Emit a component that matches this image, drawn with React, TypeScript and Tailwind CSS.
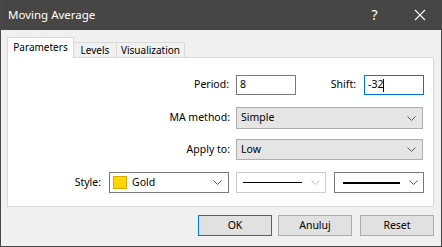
import React from "react";

const Chevron = ({ color = "#5a5a5a" }: { color?: string }) => (
  <svg width="9" height="5" viewBox="0 0 9 5" className="shrink-0">
    <polyline points="0.5,0.5 4.5,4.5 8.5,0.5" fill="none" stroke={color} strokeWidth="1" />
  </svg>
);

export default function App() {
  return (
    <div
      className="w-[442px] h-[247px] flex flex-col bg-[#f0f0f0] border-x border-b border-[#4a4846] text-black overflow-hidden"
      style={{ fontFamily: '"Noto Sans", "Open Sans", sans-serif' }}
    >
      {/* title bar */}
      <div className="h-[30px] shrink-0 bg-[#484644] flex items-center pl-[8px] text-white -mx-px">
        <div className="text-[11.5px] leading-none flex-1">Moving Average</div>
        <div className="w-[45px] flex justify-center text-[14px] leading-none">?</div>
        <div className="w-[45px] flex justify-center">
          <svg width="12" height="12" viewBox="0 0 12 12">
            <path d="M1 1 L11 11 M11 1 L1 11" stroke="#ffffff" strokeWidth="1.1" fill="none" />
          </svg>
        </div>
      </div>

      <div className="flex-1 flex flex-col pl-[6px] pr-[7px] text-[10.5px]">
        {/* tabs */}
        <div className="h-[28px] flex items-end pt-[7px] relative z-10 text-[10px]">
          <div className="h-[21px] w-[67px] bg-white border border-b-0 border-[#d9d9d9] flex items-center justify-center pb-[2px]">
            Parameters
          </div>
          <div className="h-[16px] w-[43px] border-t border-r border-[#d9d9d9] flex items-center justify-center">
            Levels
          </div>
          <div className="h-[16px] w-[68px] border-t border-r border-[#d9d9d9] flex items-center justify-center">
            Visualization
          </div>
        </div>

        {/* panel */}
        <div className="h-[150px] -mt-px bg-white border border-[#d9d9d9] flex flex-col pt-[17px]">
          {/* row 1 */}
          <div className="flex items-center h-[20px]">
            <div className="w-[221px] text-right">Period:</div>
            <div className="ml-[7px] w-[60px] h-[20px] border border-[#7a7a7a] flex items-center pl-[3px]">8</div>
            <div className="w-[60px] text-right">Shift:</div>
            <div className="ml-[8px] w-[60px] h-[20px] border border-[#0078d7] flex items-center pl-[3px]">
              <span>-32</span>
              <span className="w-px h-[13px] bg-black" />
            </div>
          </div>
          {/* row 2 */}
          <div className="flex items-center h-[22px] mt-[12px]">
            <div className="w-[222px] text-right">MA method:</div>
            <div className="ml-[6px] w-[187px] h-[22px] bg-[#e5e5e5] border border-[#adadad] flex items-center pl-[4px] pr-[6px]">
              <span className="flex-1">Simple</span>
              <Chevron />
            </div>
          </div>
          {/* row 3 */}
          <div className="flex items-center h-[21px] mt-[10px]">
            <div className="w-[222px] text-right">Apply to:</div>
            <div className="ml-[6px] w-[187px] h-[21px] bg-[#e5e5e5] border border-[#adadad] flex items-center pl-[4px] pr-[6px]">
              <span className="flex-1">Low</span>
              <Chevron />
            </div>
          </div>
          {/* row 4 */}
          <div className="flex items-center h-[21px] mt-[12px]">
            <div className="w-[93px] text-right">Style:</div>
            <div className="ml-[8px] w-[120px] h-[21px] bg-white border border-[#7a7a7a] flex items-center pl-[3px] pr-[6px]">
              <span className="w-[14px] h-[13px] bg-[#ffd700] border border-[#d9aa00]" />
              <span className="flex-1 ml-[5px]">Gold</span>
              <Chevron />
            </div>
            <div className="ml-[7px] w-[90px] h-[21px] bg-white border border-[#cccccc] flex items-center pl-[6px] pr-[5px]">
              <span className="w-[59px] h-px bg-black" />
              <span className="flex-1" />
              <Chevron color="#c4c4c4" />
            </div>
            <div className="ml-[8px] w-[90px] h-[21px] bg-white border border-[#7a7a7a] flex items-center pl-[8px] pr-[5px]">
              <span className="w-[57px] h-[2px] bg-black" />
              <span className="flex-1" />
              <Chevron />
            </div>
          </div>
        </div>

        {/* buttons */}
        <div className="flex justify-end mt-[8px]">
          <div className="w-[74px] h-[21px] bg-[#e1e1e1] border border-[#0078d7] flex items-center justify-center">OK</div>
          <div className="ml-[6px] w-[74px] h-[21px] bg-[#e1e1e1] border border-[#adadad] flex items-center justify-center">Anuluj</div>
          <div className="ml-[8px] w-[74px] h-[21px] bg-[#e1e1e1] border border-[#adadad] flex items-center justify-center">Reset</div>
        </div>
      </div>
    </div>
  );
}
